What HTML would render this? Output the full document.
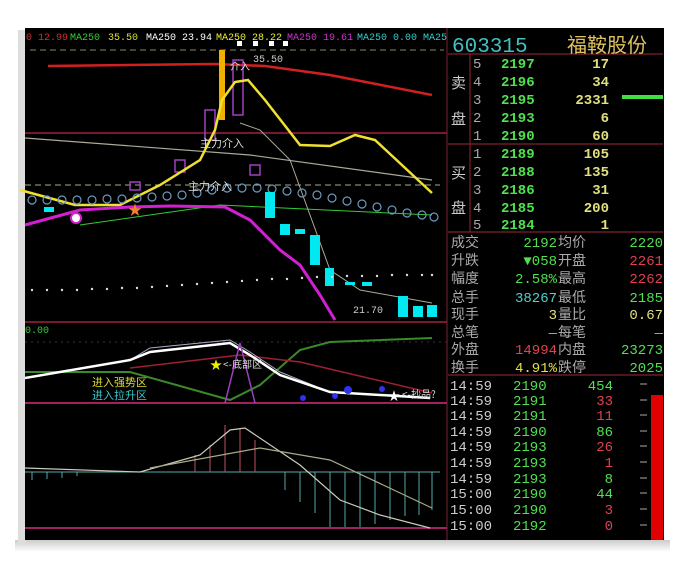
<!DOCTYPE html>
<html><head><meta charset="utf-8"><style>
body{margin:0;width:690px;height:563px;background:#fff;overflow:hidden;font-family:"Liberation Mono","Noto Sans CJK SC",monospace}
svg{position:absolute;left:0;top:0}
svg text{font-family:"Liberation Mono","Noto Sans CJK SC",monospace}
.c{font-family:"Noto Sans CJK SC","WenQuanYi Zen Hei",sans-serif}
</style></head><body>
<svg width="690" height="563" viewBox="0 0 690 563">
<defs><linearGradient id="sh" x1="0" y1="0" x2="0" y2="1"><stop offset="0" stop-color="#ccc"/><stop offset="1" stop-color="#fff"/></linearGradient></defs>
<rect x="15" y="540" width="655" height="12" fill="url(#sh)"/>
<rect x="18" y="30" width="8" height="515" fill="#ddd"/>
<rect x="25" y="28" width="639" height="512" fill="#000"/>
<!-- title line -->
<g font-size="10">
<text x="26" y="40" fill="#d03030">0 12.99</text>
<text x="70" y="40" fill="#3c3">MA250</text><text x="108" y="40" fill="#dd3">35.50</text>
<text x="146" y="40" fill="#fff">MA250 23.94</text>
<text x="216" y="40" fill="#ee3">MA250 28.22</text>
<text x="287" y="40" fill="#c3c">MA250 19.61</text>
<text x="357" y="40" fill="#3cc">MA250 0.00 MA25</text>
</g>
<line x1="30" y1="50" x2="444" y2="50" stroke="#886" stroke-dasharray="6,4"/>
<!-- separators -->
<line x1="447" y1="28" x2="447" y2="540" stroke="#802030"/>
<line x1="25" y1="133" x2="447" y2="133" stroke="#a02040" stroke-width="1.5"/>
<line x1="25" y1="322" x2="447" y2="322" stroke="#a02040" stroke-width="1.5"/>
<line x1="25" y1="403" x2="447" y2="403" stroke="#a02060" stroke-width="2"/>
<line x1="25" y1="528" x2="447" y2="528" stroke="#a02060" stroke-width="2"/>
<line x1="25" y1="185" x2="440" y2="185" stroke="#aa8" stroke-dasharray="6,4"/>
<!-- main chart -->
<polyline points="48,66 215,64 265,66 330,75 432,95" fill="none" stroke="#d02020" stroke-width="2.5"/>
<polyline points="25,138 250,155 432,180" fill="none" stroke="#aa9" stroke-width="1.2"/>
<polyline points="80,225 220,205 432,215" fill="none" stroke="#3c3" stroke-width="1"/>
<rect x="219" y="50" width="6" height="70" fill="#f0b000"/>
<g fill="none" stroke="#a040c0" stroke-width="1.5">
<rect x="205" y="110" width="10" height="30"/><rect x="233" y="60" width="10" height="55"/>
<rect x="175" y="160" width="10" height="12"/><rect x="250" y="165" width="10" height="10"/>
<rect x="130" y="182" width="10" height="8"/>
</g>
<polyline points="20,190 75,205 120,205 160,185 200,160 215,130 222,100 235,82 248,80 265,100 300,145 330,146 355,135 375,140 432,193" fill="none" stroke="#f0e030" stroke-width="2.5"/>
<polyline points="240,123 260,130 290,160 330,270 360,290 432,303" fill="none" stroke="#aa9" stroke-width="1"/>
<g fill="none" stroke="#6a9abf" stroke-width="1.2">
<circle cx="32" cy="200" r="4"/><circle cx="47" cy="200" r="4"/><circle cx="62" cy="200" r="4"/><circle cx="77" cy="200" r="4"/><circle cx="92" cy="200" r="4"/><circle cx="107" cy="199" r="4"/><circle cx="122" cy="199" r="4"/><circle cx="137" cy="198" r="4"/><circle cx="152" cy="197" r="4"/><circle cx="167" cy="196" r="4"/><circle cx="182" cy="195" r="4"/><circle cx="197" cy="193" r="4"/><circle cx="212" cy="190" r="4"/><circle cx="227" cy="188" r="4"/><circle cx="242" cy="188" r="4"/><circle cx="257" cy="188" r="4"/><circle cx="272" cy="189" r="4"/><circle cx="287" cy="191" r="4"/><circle cx="302" cy="193" r="4"/><circle cx="317" cy="195" r="4"/><circle cx="332" cy="198" r="4"/><circle cx="347" cy="201" r="4"/><circle cx="362" cy="204" r="4"/><circle cx="377" cy="207" r="4"/><circle cx="392" cy="210" r="4"/><circle cx="407" cy="213" r="4"/><circle cx="422" cy="215" r="4"/><circle cx="434" cy="217" r="4"/>
</g>
<polyline points="25,225 80,210 130,207 170,206 225,207 250,220 280,250 300,265 320,295 335,320" fill="none" stroke="#d020d0" stroke-width="3"/>
<g fill="#00e8f0">
<rect x="265" y="192" width="10" height="26"/><rect x="280" y="224" width="10" height="11"/><rect x="295" y="229" width="10" height="5"/><rect x="310" y="235" width="10" height="30"/><rect x="325" y="268" width="9" height="18"/><rect x="345" y="282" width="10" height="3"/><rect x="362" y="282" width="10" height="4"/><rect x="398" y="296" width="10" height="21"/><rect x="413" y="306" width="10" height="11"/><rect x="427" y="305" width="10" height="12"/>
<rect x="44" y="207" width="10" height="5"/>
</g>
<g fill="#ddd">
<circle cx="32" cy="290" r="1.2"/><circle cx="47" cy="290" r="1.2"/><circle cx="62" cy="290" r="1.2"/><circle cx="77" cy="290" r="1.2"/><circle cx="92" cy="289" r="1.2"/><circle cx="107" cy="289" r="1.2"/><circle cx="122" cy="288" r="1.2"/><circle cx="137" cy="288" r="1.2"/><circle cx="152" cy="287" r="1.2"/><circle cx="167" cy="286" r="1.2"/><circle cx="182" cy="285" r="1.2"/><circle cx="197" cy="284" r="1.2"/><circle cx="212" cy="283" r="1.2"/><circle cx="227" cy="282" r="1.2"/><circle cx="242" cy="281" r="1.2"/><circle cx="257" cy="280" r="1.2"/><circle cx="272" cy="279" r="1.2"/><circle cx="287" cy="279" r="1.2"/><circle cx="302" cy="278" r="1.2"/><circle cx="317" cy="277" r="1.2"/><circle cx="332" cy="277" r="1.2"/><circle cx="347" cy="276" r="1.2"/><circle cx="362" cy="276" r="1.2"/><circle cx="377" cy="276" r="1.2"/><circle cx="392" cy="275" r="1.2"/><circle cx="407" cy="275" r="1.2"/><circle cx="422" cy="275" r="1.2"/><circle cx="432" cy="275" r="1.2"/>
</g>
<circle cx="76" cy="218" r="5" fill="#fff" stroke="#d020d0" stroke-width="2"/>
<text x="128" y="215" fill="#f08030" font-size="14">★</text>
<g fill="#fff" font-size="9"><rect x="237" y="41" width="5" height="5"/><rect x="253" y="41" width="5" height="5"/><rect x="269" y="41" width="5" height="5"/><rect x="283" y="41" width="5" height="5"/></g>
<text x="253" y="62" fill="#ccc" font-size="10">35.50</text>
<text x="230" y="70" fill="#ddd" font-size="10" class="c">介入</text>
<text x="200" y="147" fill="#ddd" font-size="11" class="c">主力介入</text>
<text x="188" y="190" fill="#ddd" font-size="11" class="c">主力介入</text>
<text x="353" y="313" fill="#ccc" font-size="10">21.70</text>
<!-- indicator 1 -->
<text x="25" y="333" fill="#3c3" font-size="10">0.00</text>
<line x1="25" y1="342" x2="447" y2="342" stroke="#333" stroke-dasharray="2,4"/>
<polyline points="25,372 130,372 230,400 260,385 300,350 330,342 432,338" fill="none" stroke="#3a8a2a" stroke-width="2"/>
<polyline points="130,368 240,355 300,362 432,393" fill="none" stroke="#a02030" stroke-width="1.5"/>
<polyline points="130,360 150,348 230,340 250,352 280,372 330,392 430,398" fill="none" stroke="#aac" stroke-width="1"/>
<polyline points="25,378 130,360 150,352 230,343 250,355 280,375 330,392 430,398" fill="none" stroke="#fff" stroke-width="2.5"/>
<polyline points="225,403 240,343 255,403" fill="none" stroke="#a040c0" stroke-width="1.5"/>
<text x="210" y="369" fill="#ee0" font-size="12">★</text>
<text x="223" y="368" fill="#ddd" font-size="10" class="c">&lt;-底部区</text>
<g fill="#3030f0"><circle cx="303" cy="398" r="3"/><circle cx="335" cy="396" r="3"/><circle cx="348" cy="390" r="4"/><circle cx="382" cy="389" r="3"/></g>
<text x="388" y="400" fill="#fff" font-size="12">★</text>
<text x="402" y="398" fill="#ddd" font-size="10" class="c">&lt;-抄品?</text>
<text x="92" y="386" fill="#dd3" font-size="11" class="c">进入强势区</text>
<text x="92" y="399" fill="#3cc" font-size="11" class="c">进入拉升区</text>
<!-- indicator 2 -->
<line x1="25" y1="472" x2="440" y2="472" stroke="#5aa" stroke-width="1"/>
<g stroke="#5aa" stroke-width="1">
<line x1="32" y1="472" x2="32" y2="480"/><line x1="47" y1="472" x2="47" y2="479"/><line x1="62" y1="472" x2="62" y2="478"/><line x1="77" y1="472" x2="77" y2="476"/>
<line x1="285" y1="472" x2="285" y2="490"/><line x1="300" y1="472" x2="300" y2="502"/><line x1="315" y1="472" x2="315" y2="513"/><line x1="330" y1="472" x2="330" y2="527"/><line x1="345" y1="472" x2="345" y2="527"/><line x1="360" y1="472" x2="360" y2="527"/><line x1="375" y1="472" x2="375" y2="524"/><line x1="390" y1="472" x2="390" y2="520"/><line x1="405" y1="472" x2="405" y2="516"/><line x1="419" y1="472" x2="419" y2="515"/><line x1="432" y1="472" x2="432" y2="510"/>
</g>
<g stroke="#c05060" stroke-width="1">
<line x1="195" y1="472" x2="195" y2="455"/><line x1="210" y1="472" x2="210" y2="445"/><line x1="225" y1="472" x2="225" y2="425"/><line x1="240" y1="472" x2="240" y2="428"/><line x1="255" y1="472" x2="255" y2="440"/>
</g>
<polyline points="25,468 140,472 200,455 230,430 245,428 300,465 340,500 380,515 430,528" fill="none" stroke="#ccb" stroke-width="1.2"/>
<polyline points="150,468 260,448 330,460 432,508" fill="none" stroke="#aa8" stroke-width="1.2"/>
<!-- right panel -->
<g stroke="#802030" stroke-width="1.2">
<line x1="448" y1="54" x2="663" y2="54"/><line x1="448" y1="144" x2="663" y2="144"/><line x1="448" y1="232" x2="663" y2="232"/><line x1="448" y1="375" x2="663" y2="375"/>
<line x1="470" y1="54" x2="470" y2="232"/>
</g>
<text x="452" y="52" fill="#40c0c0" font-size="21" font-family="Liberation Serif">603315</text>
<text x="567" y="52" fill="#e0c060" font-size="20" class="c">福鞍股份</text>
<g class="c" fill="#ccc" font-size="15"><text x="451" y="88">卖</text><text x="451" y="124">盘</text><text x="451" y="178">买</text><text x="451" y="213">盘</text></g>
<g font-size="14" font-weight="bold">
<g fill="#aaa" font-weight="normal"><text x="473" y="68">5</text><text x="473" y="86">4</text><text x="473" y="104">3</text><text x="473" y="122">2</text><text x="473" y="140">1</text><text x="473" y="158">1</text><text x="473" y="176">2</text><text x="473" y="194">3</text><text x="473" y="212">4</text><text x="473" y="229">5</text></g>
<g fill="#50e050"><text x="501" y="68">2197</text><text x="501" y="86">2196</text><text x="501" y="104">2195</text><text x="501" y="122">2193</text><text x="501" y="140">2190</text><text x="501" y="158">2189</text><text x="501" y="176">2188</text><text x="501" y="194">2186</text><text x="501" y="212">2185</text><text x="501" y="229">2184</text></g>
<g fill="#e0e080" text-anchor="end"><text x="609" y="68">17</text><text x="609" y="86">34</text><text x="609" y="104">2331</text><text x="609" y="122">6</text><text x="609" y="140">60</text><text x="609" y="158">105</text><text x="609" y="176">135</text><text x="609" y="194">31</text><text x="609" y="212">200</text><text x="609" y="229">1</text></g>
</g>
<rect x="622" y="95" width="41" height="4" fill="#40e040"/>
<g class="c" fill="#aaa" font-size="14">
<text x="451" y="247">成交</text><text x="451" y="265">升跌</text><text x="451" y="283">幅度</text><text x="451" y="302">总手</text><text x="451" y="319">现手</text><text x="451" y="337">总笔</text><text x="451" y="354">外盘</text><text x="451" y="372">换手</text>
<text x="558" y="247">均价</text><text x="558" y="265">开盘</text><text x="558" y="283">最高</text><text x="558" y="302">最低</text><text x="558" y="319">量比</text><text x="558" y="337">每笔</text><text x="558" y="354">内盘</text><text x="558" y="372">跌停</text>
</g>
<g font-size="14" text-anchor="end">
<text x="557" y="247" fill="#50e050">2192</text><text x="557" y="265" fill="#50e050">▼058</text><text x="557" y="283" fill="#50e050">2.58%</text><text x="557" y="302" fill="#50d0d0">38267</text><text x="557" y="319" fill="#e0e080">3</text><text x="557" y="337" fill="#aaa">—</text><text x="557" y="354" fill="#e04050">14994</text><text x="557" y="372" fill="#e0e040">4.91%</text>
<text x="663" y="247" fill="#50e050">2220</text><text x="663" y="265" fill="#e04050">2261</text><text x="663" y="283" fill="#e04050">2262</text><text x="663" y="302" fill="#50e050">2185</text><text x="663" y="319" fill="#e0e080">0.67</text><text x="663" y="337" fill="#aaa">—</text><text x="663" y="354" fill="#50e050">23273</text><text x="663" y="372" fill="#50e050">2025</text>
</g>
<g font-size="14">
<g fill="#ccc"><text x="450" y="390">14:59</text><text x="450" y="405">14:59</text><text x="450" y="420">14:59</text><text x="450" y="436">14:59</text><text x="450" y="451">14:59</text><text x="450" y="467">14:59</text><text x="450" y="483">14:59</text><text x="450" y="498">15:00</text><text x="450" y="514">15:00</text><text x="450" y="530">15:00</text></g>
<g fill="#50e050"><text x="513" y="390">2190</text><text x="513" y="405">2191</text><text x="513" y="420">2191</text><text x="513" y="436">2190</text><text x="513" y="451">2193</text><text x="513" y="467">2193</text><text x="513" y="483">2193</text><text x="513" y="498">2190</text><text x="513" y="514">2190</text><text x="513" y="530">2192</text></g>
<g text-anchor="end"><text x="613" y="390" fill="#50e050">454</text><text x="613" y="405" fill="#e04050">33</text><text x="613" y="420" fill="#e04050">11</text><text x="613" y="436" fill="#50e050">86</text><text x="613" y="451" fill="#e04050">26</text><text x="613" y="467" fill="#e04050">1</text><text x="613" y="483" fill="#50e050">8</text><text x="613" y="498" fill="#50e050">44</text><text x="613" y="514" fill="#e04050">3</text><text x="613" y="530" fill="#e04050">0</text></g>
</g>
<rect x="651" y="395" width="12" height="145" fill="#e00000"/>
<g stroke="#aaa"><line x1="640" y1="384" x2="647" y2="384"/><line x1="640" y1="400" x2="647" y2="400"/><line x1="640" y1="415" x2="647" y2="415"/><line x1="640" y1="431" x2="647" y2="431"/><line x1="640" y1="446" x2="647" y2="446"/><line x1="640" y1="462" x2="647" y2="462"/><line x1="640" y1="478" x2="647" y2="478"/><line x1="640" y1="493" x2="647" y2="493"/><line x1="640" y1="509" x2="647" y2="509"/><line x1="640" y1="525" x2="647" y2="525"/></g>
</svg>
</body></html>
